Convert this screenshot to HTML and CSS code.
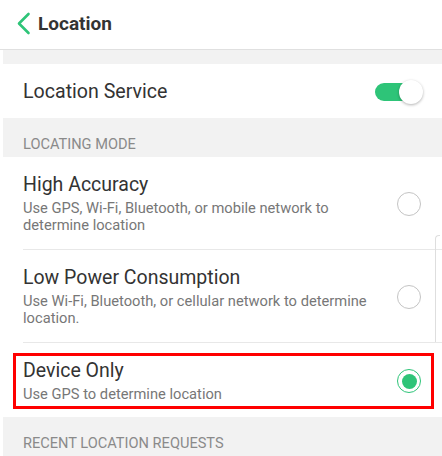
FILE: index.html
```html
<!DOCTYPE html>
<html lang="en">
<head>
<meta charset="utf-8">
<title>Location</title>
<link rel="stylesheet" href="styles.css">
</head>
<body>
<div class="screen">
  <header class="header">
    <svg class="back" width="14" height="24" viewBox="0 0 14 24">
      <polyline points="11.5,2 2,11.5 11.5,21" fill="none" stroke="#2ec478" stroke-width="2.6" stroke-linecap="round" stroke-linejoin="round"/>
    </svg>
    <h1 class="title">Location</h1>
  </header>

  <div class="band"></div>

  <div class="row service">
    <span class="row-label">Location Service</span>
    <span class="switch"><span class="switch-thumb"></span></span>
  </div>

  <div class="section">LOCATING MODE</div>

  <div class="options">
    <div class="option">
      <div class="option-text">
        <div class="option-title">High Accuracy</div>
        <div class="option-sub">Use GPS, Wi-Fi, Bluetooth, or mobile network to determine location</div>
      </div>
      <span class="radio"></span>
    </div>
    <div class="option">
      <div class="option-text">
        <div class="option-title">Low Power Consumption</div>
        <div class="option-sub">Use Wi-Fi, Bluetooth, or cellular network to determine location.</div>
      </div>
      <span class="radio"></span>
    </div>
    <div class="option selected">
      <div class="option-text">
        <div class="option-title">Device Only</div>
        <div class="option-sub">Use GPS to determine location</div>
      </div>
      <span class="radio checked"></span>
      <span class="highlight"></span>
    </div>
    <span class="edge"></span>
  </div>

  <div class="section">RECENT LOCATION REQUESTS</div>
</div>
</body>
</html>
```

FILE: styles.css
```css
html, body {
  margin: 0;
  padding: 0;
  background: #ffffff;
}

body {
  font-family: Roboto, "Liberation Sans", Arial, sans-serif;
  color: #333333;
}

.screen {
  width: 442px;
  height: 456px;
  overflow: hidden;
}

.header {
  height: 49px;
  border-bottom: 1px solid #e0e0e0;
  display: flex;
  align-items: center;
  padding-left: 17px;
  gap: 7px;
}

.back {
  display: block;
  margin-top: -1px;
}

.title {
  margin: 0;
  font-size: 19px;
  font-weight: 700;
  color: #333333;
  line-height: 24px;
  margin-top: -2px;
}

.band {
  height: 14px;
  background: #f2f2f2;
  margin-left: 3px;
}

.row {
  display: flex;
  align-items: center;
  justify-content: space-between;
}

.service {
  height: 54px;
  padding: 0 19px 0 23px;
}

.row-label {
  font-size: 19.6px;
  color: #333333;
}

.switch {
  position: relative;
  width: 48px;
  height: 24px;
  display: flex;
  align-items: center;
  margin-top: 2px;
}

.switch::before {
  content: "";
  display: block;
  width: 36px;
  height: 18px;
  border-radius: 9px;
  background: #2ec478;
}

.switch-thumb {
  position: absolute;
  right: 0;
  top: 0;
  width: 24px;
  height: 24px;
  border-radius: 50%;
  background: #ffffff;
  box-shadow: 0 1px 3px rgba(0, 0, 0, 0.3);
}

.section {
  margin-left: 3px;
  background: #f2f2f2;
  height: 39px;
  box-sizing: border-box;
  padding: 18px 0 0 20px;
  font-size: 14.6px;
  line-height: 17px;
  color: #8a8a8a;
}

.options {
  position: relative;
}

.option {
  position: relative;
  display: flex;
  align-items: center;
  justify-content: space-between;
  margin-left: 23px;
  padding: 16px 21px 15px 0;
  border-bottom: 1px solid #e8e8e8;
}

.option.selected {
  border-bottom: none;
  padding-bottom: 14px;
}

.option-text {
  width: 352px;
}

.option-title {
  font-size: 19.5px;
  line-height: 24px;
  color: #333333;
}

.option-sub {
  margin-top: 3px;
  font-size: 14.7px;
  line-height: 17px;
  color: #777777;
}

.radio {
  width: 24px;
  height: 24px;
  box-sizing: border-box;
  border-radius: 50%;
  border: 1.5px solid #c4c4c4;
  flex: none;
  display: flex;
  align-items: center;
  justify-content: center;
}

.radio.checked {
  border-color: #2ec478;
}

.radio.checked::after {
  content: "";
  width: 15px;
  height: 15px;
  border-radius: 50%;
  background: #2ec478;
}

.highlight {
  position: absolute;
  left: -10px;
  right: 8px;
  top: 10px;
  bottom: 8px;
  border: 3px solid #ff0000;
  pointer-events: none;
}

.edge {
  position: absolute;
  right: 2px;
  top: 78px;
  width: 4px;
  height: 106px;
  border-left: 1px solid #dedede;
  border-top: 1px solid #dedede;
  border-top-left-radius: 4px;
}
```
